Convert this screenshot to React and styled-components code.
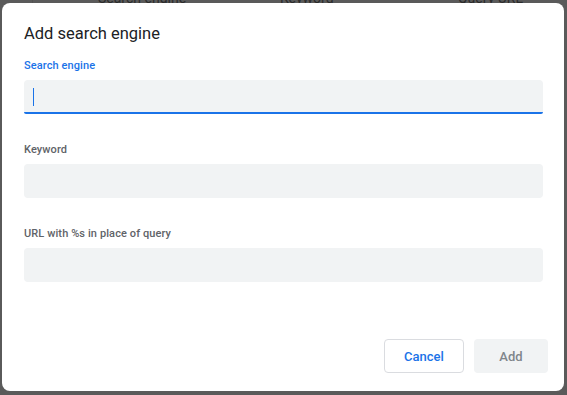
import React from 'react'
import styled, { createGlobalStyle } from 'styled-components'

const GlobalStyle = createGlobalStyle`
  html, body {
    margin: 0;
    padding: 0;
    background: #5a5a5a;
    font-family: Roboto, 'Liberation Sans', sans-serif;
  }
`

const Backdrop = styled.div`
  position: relative;
  width: 567px;
  height: 395px;
  overflow: hidden;
  background: #5a5a5a;
`

const HeaderRow = styled.div`
  display: flex;
  margin-top: -10px;
  height: 16px;
  font-size: 14px;
  line-height: 16px;
  color: #2b2b2b;
  border-left: 1px solid #525252;
  margin-left: 32px;
`

const HeaderCell = styled.div`
  width: ${({ w }) => w}px;
  padding-left: ${({ pad }) => pad}px;
  box-sizing: border-box;
`

const Dialog = styled.div`
  position: absolute;
  top: 3px;
  left: 2px;
  width: 562px;
  height: 388px;
  box-sizing: border-box;
  background: #fff;
  border-radius: 8px;
  padding: 19px 21px 18px 22px;
  display: flex;
  flex-direction: column;
`

const Title = styled.h1`
  margin: 0 0 12px;
  font-size: 16.5px;
  line-height: 24px;
  font-weight: 400;
  color: #202124;
`

const Fields = styled.div`
  display: flex;
  flex-direction: column;
  gap: 28px;
  flex: 1;
`

const Field = styled.div`
  display: flex;
  flex-direction: column;
  gap: 6px;
`

const Label = styled.label`
  font-size: 11px;
  line-height: 16px;
  font-weight: 500;
  letter-spacing: 0.1px;
  color: ${({ focused }) => (focused ? '#1a73e8' : '#5f6368')};
`

const InputBox = styled.div`
  height: 34px;
  box-sizing: border-box;
  background: #f1f3f4;
  border-radius: 4px;
  display: flex;
  align-items: center;
  padding-left: 9px;
  border-bottom: 2px solid ${({ focused }) => (focused ? '#1a73e8' : 'transparent')};
  ${({ focused }) => focused && 'border-bottom-left-radius: 2px; border-bottom-right-radius: 2px;'}
`

const Caret = styled.span`
  width: 1px;
  height: 18px;
  margin-top: 1px;
  background: #1a73e8;
`

const Actions = styled.div`
  display: flex;
  justify-content: flex-end;
  gap: 10px;
  margin-right: -5px;
`

const Button = styled.button`
  height: 34px;
  width: ${({ w }) => w}px;
  box-sizing: border-box;
  border-radius: 4px;
  font-family: Roboto, 'Liberation Sans', sans-serif;
  font-size: 13px;
  font-weight: 500;
  cursor: pointer;
  border: 1px solid ${({ primary }) => (primary ? 'transparent' : '#dadce0')};
  background: ${({ primary }) => (primary ? '#f1f3f4' : '#fff')};
  color: ${({ primary }) => (primary ? '#80868b' : '#1a73e8')};
`

const fields = [
  { label: 'Search engine', focused: true },
  { label: 'Keyword' },
  { label: 'URL with %s in place of query' }
]

export default function App () {
  return (
    <Backdrop>
      <GlobalStyle />
      <HeaderRow>
        <HeaderCell w={180} pad={65}>Search engine</HeaderCell>
        <HeaderCell w={180} pad={69}>Keyword</HeaderCell>
        <HeaderCell w={180} pad={69}>Query URL</HeaderCell>
      </HeaderRow>
      <Dialog>
        <Title>Add search engine</Title>
        <Fields>
          {fields.map(f => (
            <Field key={f.label}>
              <Label focused={f.focused}>{f.label}</Label>
              <InputBox focused={f.focused}>
                {f.focused && <Caret />}
              </InputBox>
            </Field>
          ))}
        </Fields>
        <Actions>
          <Button w={80}>Cancel</Button>
          <Button w={74} primary disabled>Add</Button>
        </Actions>
      </Dialog>
    </Backdrop>
  )
}
